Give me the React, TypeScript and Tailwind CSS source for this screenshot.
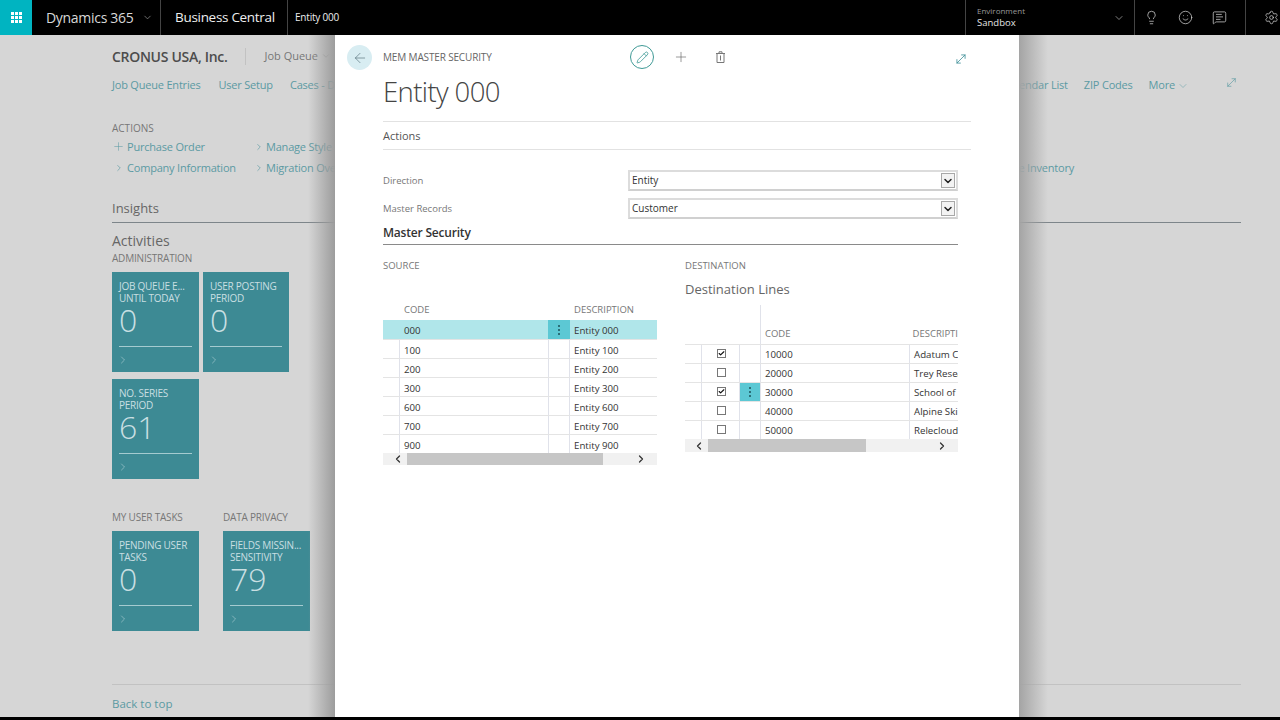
import React from 'react';
import { ArrowLeft, Check, ChevronDown, ChevronLeft, ChevronRight, Lightbulb, MessageSquareText, MoveDiagonal, Pencil, Plus, Settings, Smile } from 'lucide-react';

const FONT = "font-['Open_Sans','Noto_Sans',sans-serif]";

const Tile = ({ line1, line2, value, w = 'w-[87px]' }: { line1: string; line2: string; value: string; w?: string }) => (
    <div className={`${w} h-[100px] bg-[#3d8a94] px-[7px] pt-[8px] flex flex-col text-[#c9dfe2] shrink-0`}>
        <div className="text-[10px] leading-[12px] whitespace-nowrap tracking-[-0.25px]">{line1}</div>
        <div className="text-[10px] leading-[12px] whitespace-nowrap tracking-[-0.25px]">{line2}</div>
        <div className="text-[32px] leading-[32px] font-light">{value}</div>
        <div className="h-px bg-[#a5cbd0] mt-[10px]"></div>
        <ChevronRight size={12} strokeWidth={1} className="mt-[7px] -ml-[2px]" />
    </div>
);

const Dots = () => (
    <div className="flex flex-col items-center gap-[2px]">
        <span className="w-[2px] h-[2px] bg-[#2b6f78]"></span>
        <span className="w-[2px] h-[2px] bg-[#2b6f78]"></span>
        <span className="w-[2px] h-[2px] bg-[#2b6f78]"></span>
    </div>
);

const ScrollBar = ({ thumbLeft, thumbWidth, h }: { thumbLeft: string; thumbWidth: string; h: string }) => (
    <div className={`${h} bg-[#f1f1f1] flex items-center text-[#333]`}>
        <div className={`${thumbLeft} flex justify-center pl-[5px]`}>
            <ChevronLeft size={12} strokeWidth={2.5} />
        </div>
        <div className={`${thumbWidth} h-full bg-[#c6c6c6]`}></div>
        <div className="flex-1 flex justify-end pr-[10px]">
            <ChevronRight size={12} strokeWidth={2.5} />
        </div>
    </div>
);

const SelectBox = ({ value }: { value: string }) => (
    <div className="w-[330px] h-[21px] border-2 border-[#dcdcdc] border-b-[#d0d0d0] flex items-center justify-between pl-[2px] pr-[1px] text-[10px] text-[#333]">
        <span>{value}</span>
        <div className="w-[14px] h-[15px] border border-[#a8a8a8] bg-[#f3f3f3] flex items-center justify-center">
            <ChevronDown size={12} strokeWidth={3} className="text-[#222]" />
        </div>
    </div>
);

const sourceRows = [
    ['000', 'Entity 000'],
    ['100', 'Entity 100'],
    ['200', 'Entity 200'],
    ['300', 'Entity 300'],
    ['600', 'Entity 600'],
    ['700', 'Entity 700'],
    ['900', 'Entity 900'],
];

const destRows = [
    { code: '10000', name: 'Adatum C', checked: true },
    { code: '20000', name: 'Trey Resea', checked: false },
    { code: '30000', name: 'School of', checked: true, active: true },
    { code: '40000', name: 'Alpine Ski', checked: false },
    { code: '50000', name: 'Relecloud', checked: false },
];

export default function App() {
    return (
        <div className={`${FONT} relative w-[1280px] h-[720px] overflow-hidden bg-[#d6d6d6] flex flex-col`}>
            {/* Top bar */}
            <div className="h-[35px] bg-black flex items-stretch text-white shrink-0">
                <div className="w-[32px] bg-[#00b4c1] flex items-center justify-center">
                    <div className="grid grid-cols-3 gap-[1px]">
                        {Array.from({ length: 9 }).map((_, i) => (
                            <span key={i} className="w-[3px] h-[3px] bg-white"></span>
                        ))}
                    </div>
                </div>
                <div className="w-[129px] pl-[14px] flex items-center gap-[9px] text-[14px] text-[#d8d8d8] border-r border-[#444] whitespace-nowrap tracking-[-0.3px]">
                    Dynamics 365
                    <ChevronDown size={11} strokeWidth={1.5} className="text-[#999]" />
                </div>
                <div className="w-[127px] pl-[14px] flex items-center text-[13.5px] text-[#eeeeee] border-r border-[#444] whitespace-nowrap tracking-[-0.3px]">
                    Business Central
                </div>
                <div className="pl-[7px] flex items-center text-[10px] font-medium tracking-[-0.2px] text-[#eeeeee]">Entity 000</div>
                <div className="ml-auto w-[169px] pl-[11px] pr-[9px] border-l border-[#444] flex items-center justify-between">
                    <div className="flex flex-col -mt-[2px]">
                        <span className="text-[8px] leading-[11px] text-[#999]">Environment</span>
                        <span className="text-[9.5px] leading-[13px] text-[#e6e6e6]">Sandbox</span>
                    </div>
                    <ChevronDown size={12} strokeWidth={1.5} className="text-[#aaa]" />
                </div>
                <div className="w-[111px] border-l border-[#444] flex items-center pl-[9px] gap-[19px] text-[#d0d0d0]">
                    <Lightbulb size={15} strokeWidth={1.2} />
                    <Smile size={15} strokeWidth={1.2} />
                    <MessageSquareText size={15} strokeWidth={1.2} />
                </div>
                <div className="w-[35px] border-l border-[#444] flex items-center pl-[18px] text-[#d0d0d0]">
                    <Settings size={15} strokeWidth={1.2} />
                </div>
            </div>

            {/* Page behind the dialog */}
            <div className="flex-1 pl-[112px] pr-[39px] flex flex-col">
                <div className="flex items-center h-[42px]">
                    <span className="text-[14px] font-semibold text-[#4c4c4c] tracking-[-0.3px]">CRONUS USA, Inc.</span>
                    <span className="w-px h-[17px] bg-[#c2c2c2] ml-[18px] mr-[18px]"></span>
                    <span className="text-[11px] text-[#777] flex items-center gap-[3px]">Job Queue<ChevronDown size={10} strokeWidth={1} /></span>
                </div>
                <div className="flex items-center justify-between text-[11px] text-[#5b9aa3] h-[17px] tracking-[-0.2px]">
                    <div className="flex gap-[18px] whitespace-nowrap">
                        <span>Job Queue Entries</span>
                        <span>User Setup</span>
                        <span className="-ml-[1px]">Cases - Dashboard</span>
                    </div>
                    <div className="flex items-center gap-[16px] whitespace-nowrap">
                        <span>Calendar List</span>
                        <span>ZIP Codes</span>
                        <span className="flex items-center gap-[2px] mr-[20px]">More<ChevronDown size={12} strokeWidth={1} /></span>
                        <MoveDiagonal size={13} strokeWidth={1.2} className="mb-[6px] mr-[3px] text-[#5b9aa3]" />
                    </div>
                </div>
                <div className="text-[10px] leading-[14px] text-[#777] mt-[27px]">ACTIONS</div>
                <div className="flex text-[11px] text-[#5b9aa3] leading-[21px] tracking-[-0.2px] whitespace-nowrap mt-[1px]">
                    <div className="w-[142px] flex flex-col">
                        <span className="flex items-center gap-[2px]"><Plus size={13} strokeWidth={1} />Purchase Order</span>
                        <span className="flex items-center gap-[3px] pl-[2px]"><ChevronRight size={10} strokeWidth={1.6} />Company Information</span>
                    </div>
                    <div className="flex flex-col">
                        <span className="flex items-center gap-[2px]"><ChevronRight size={10} strokeWidth={1.6} />Manage Style Sheets</span>
                        <span className="flex items-center gap-[2px]"><ChevronRight size={10} strokeWidth={1.6} />Migration Overview</span>
                    </div>
                    <div className="ml-auto mr-[167px] self-end">Manage Inventory</div>
                </div>
                <div className="text-[13px] leading-[18px] text-[#666] mt-[21px]">Insights</div>
                <div className="h-px bg-[#7d858a] mt-[5px]"></div>
                <div className="text-[14px] leading-[19px] text-[#666] mt-[8px]">Activities</div>
                <div className="text-[10px] leading-[14px] text-[#777] mt-[1px] tracking-[-0.2px]">ADMINISTRATION</div>
                <div className="flex gap-[4px] mt-[7px]">
                    <Tile line1="JOB QUEUE E..." line2="UNTIL TODAY" value="0" />
                    <Tile line1="USER POSTING" line2="PERIOD" value="0" w="w-[86px]" />
                </div>
                <div className="mt-[7px]">
                    <Tile line1="NO. SERIES" line2="PERIOD" value="61" />
                </div>
                <div className="flex gap-[24px] mt-[31px]">
                    <div>
                        <div className="text-[10px] leading-[14px] text-[#777] mb-[7px] tracking-[-0.2px]">MY USER TASKS</div>
                        <Tile line1="PENDING USER" line2="TASKS" value="0" />
                    </div>
                    <div>
                        <div className="text-[10px] leading-[14px] text-[#777] mb-[7px] tracking-[-0.2px]">DATA PRIVACY</div>
                        <Tile line1="FIELDS MISSIN..." line2="SENSITIVITY" value="79" />
                    </div>
                </div>
                <div className="h-px bg-[#c2c2c2] mt-[53px]"></div>
                <div className="text-[11.5px] leading-[16px] text-[#5b9aa3] mt-[11px]">Back to top</div>
            </div>
            <div className="h-[3px] bg-black shrink-0"></div>

            {/* Dialog shadows */}
            <div className="absolute left-[290px] top-[35px] w-[45px] h-[682px] bg-gradient-to-r from-transparent via-[#d6d6d6]/0 via-40% to-[#9c9c9c]"></div>
            <div className="absolute left-[1019px] top-[35px] w-[48px] h-[682px] bg-gradient-to-l from-transparent via-[#d6d6d6]/0 via-40% to-[#a4a4a4]"></div>

            {/* Dialog */}
            <div className="absolute left-[335px] top-[35px] w-[684px] h-[682px] bg-white pl-[48px] pr-[48px]">
                <div className="relative h-[44px] flex items-center">
                    <div className="absolute -left-[36px] top-[10px] w-[25px] h-[25px] rounded-full bg-[#d8edf2] flex items-center justify-center text-[#55707a]">
                        <ArrowLeft size={16} strokeWidth={1} />
                    </div>
                    <span className="text-[10px] text-[#666] tracking-[-0.15px]">MEM MASTER SECURITY</span>
                    <div className="absolute left-[247px] top-[10px] w-[24px] h-[24px] rounded-full border border-[#3f9a96] flex items-center justify-center text-[#3f9a96]">
                        <Pencil size={13} strokeWidth={1.5} />
                    </div>
                    <Plus size={16} strokeWidth={1} className="absolute left-[290px] top-[14px] text-[#666]" />
                    <svg width="11" height="12" viewBox="0 0 11 12" className="absolute left-[332px] top-[16px] text-[#777]" fill="none" stroke="currentColor" strokeWidth="1">
                        <path d="M2 2.5h7v9H2zM1 2.5h9M4 2.5V.8h3v1.7M5.5 4.5v5" />
                    </svg>
                    <MoveDiagonal size={14} strokeWidth={1.4} className="absolute left-[571px] top-[17px] text-[#3f8f98]" />
                </div>
                <div className="text-[27.5px] leading-[40px] font-light text-[#444] tracking-[-0.6px] mt-[-7px] mb-[9px]">Entity 000</div>
                <div className="h-[29px] border-y border-[#e2e2e2] flex items-center pt-[2px] text-[11px] text-[#555] mt-[1px]">Actions</div>
                <div className="w-[575px]">
                    <div className="flex items-center mt-[20px] text-[9.5px] text-[#777]">
                        <span className="w-[245px] pt-[2px]">Direction</span>
                        <SelectBox value="Entity" />
                    </div>
                    <div className="flex items-center mt-[7px] text-[9.5px] text-[#777]">
                        <span className="w-[245px] pt-[2px]">Master Records</span>
                        <SelectBox value="Customer" />
                    </div>
                    <div className="text-[12px] font-semibold leading-[18px] text-[#333] border-b border-[#8a8a8a] pb-[2px] mt-[5px] tracking-[-0.2px]">Master Security</div>
                </div>
                <div className="flex w-[575px] mt-[14px]">
                    {/* Source table */}
                    <div className="w-[274px] mr-[28px] shrink-0">
                        <div className="text-[9.5px] leading-[14px] text-[#777]">SOURCE</div>
                        <div className="flex text-[9.5px] leading-[14px] text-[#777] mt-[30px] mb-[3px] pl-[21px]">
                            <span className="w-[170px]">CODE</span>
                            <span>DESCRIPTION</span>
                        </div>
                        {sourceRows.map((row, i) => (
                            <div key={row[0]} className={`flex h-[19px] text-[9.7px] text-[#333] ${i === 0 ? 'bg-[#b0e6ea]' : 'border-t border-[#e4e4e4]'}`}>
                                <div className={`w-[17px] ${i === 0 ? '' : 'border-r border-[#e0e2ea]'}`}></div>
                                <div className="w-[148px] pl-[4px] pt-[4px] flex items-center">{row[0]}</div>
                                <div className={`w-[22px] flex items-center justify-center ${i === 0 ? 'bg-[#5cc8d4]' : 'border-x border-[#e0e2ea]'}`}>
                                    {i === 0 && <Dots />}
                                </div>
                                <div className="pl-[4px] pt-[4px] flex items-center">{row[1]}</div>
                            </div>
                        ))}
                        <ScrollBar thumbLeft="w-[24px]" thumbWidth="w-[196px]" h="h-[12px]" />
                    </div>

                    {/* Destination table */}
                    <div className="w-[273px] shrink-0">
                        <div className="text-[9.5px] leading-[14px] text-[#777]">DESTINATION</div>
                        <div className="text-[13px] leading-[18px] text-[#666] mt-[7px] h-[16px]">Destination Lines</div>
                        <div className="flex mt-[9px]">
                            <div className="w-[76px] border-r border-[#e0e2ea] h-[39px]"></div>
                            <div className="flex-1 flex items-end text-[9.5px] leading-[14px] text-[#777] whitespace-nowrap overflow-hidden pb-[3px] pl-[4px]">
                                <span className="w-[149px]">CODE</span>
                                <span>DESCRIPTI</span>
                            </div>
                        </div>
                        {destRows.map(row => (
                            <div key={row.code} className="flex h-[19px] text-[9.7px] text-[#333] border-t border-[#e4e4e4] whitespace-nowrap overflow-hidden">
                                <div className="w-[17px] shrink-0 border-r border-[#e0e2ea]"></div>
                                <div className="w-[38px] shrink-0 flex items-center justify-center border-r border-[#e0e2ea] pl-[1px] pb-[1px]">
                                    <div className="w-[9px] h-[9px] border border-[#777] flex items-center justify-center">
                                        {row.checked && <Check size={9} strokeWidth={4} className="text-[#111]" />}
                                    </div>
                                </div>
                                <div className={`w-[21px] shrink-0 flex items-center justify-center border-r border-[#e0e2ea] ${row.active ? 'bg-[#5cc8d4]' : ''}`}>
                                    {row.active && <Dots />}
                                </div>
                                <div className="w-[149px] shrink-0 pl-[4px] pt-[2px] flex items-center border-r border-[#e0e2ea]">{row.code}</div>
                                <div className="pl-[4px] pt-[2px] flex items-center">{row.name}</div>
                            </div>
                        ))}
                        <ScrollBar thumbLeft="w-[23px]" thumbWidth="w-[158px]" h="h-[13px]" />
                    </div>
                </div>
            </div>
        </div>
    );
}
